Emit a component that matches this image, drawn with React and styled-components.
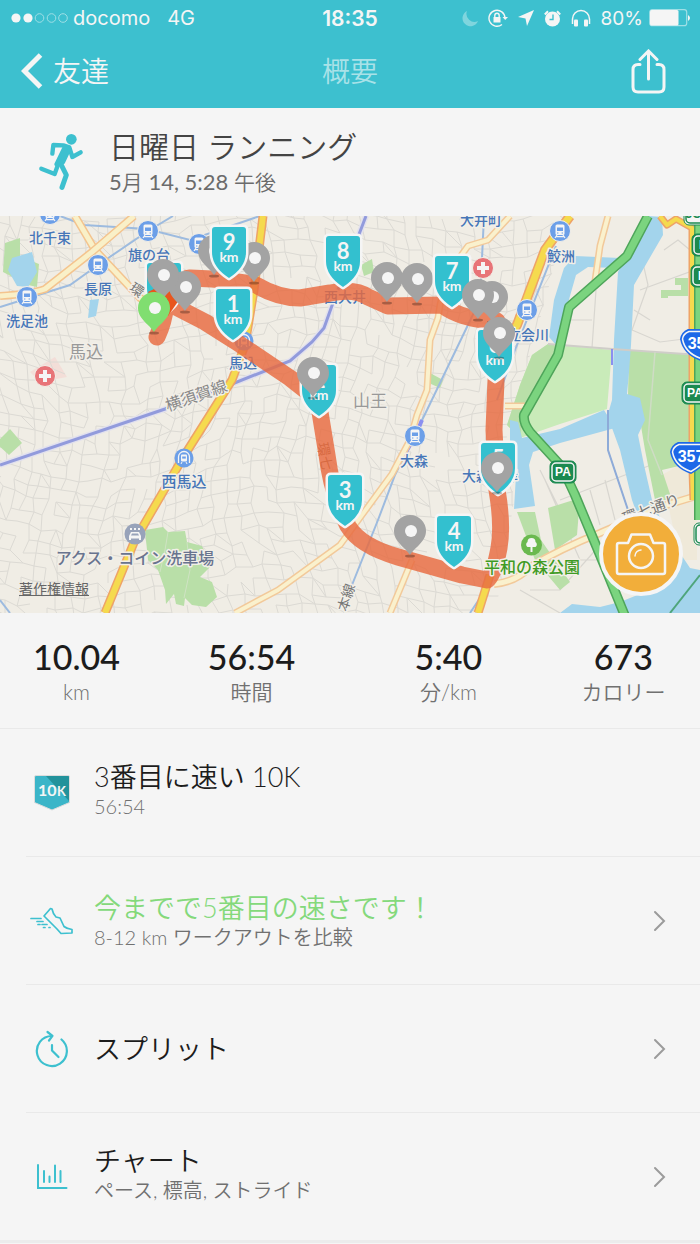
import React from 'react';
import styled, { createGlobalStyle } from 'styled-components';

const TEAL = '#3dc0cf';

const GlobalStyle = createGlobalStyle`
  * {
    box-sizing: border-box;
  }

  body {
    margin: 0;
    background: #f5f5f5;
    color: #1c1c1c;
    font-family: Lato, 'Noto Sans CJK JP', sans-serif;
    font-weight: 350;
  }
`;

const Header = styled.header`
  background: ${TEAL};
  color: #f5f5f5;
`;

const StatusBar = styled.div`
  display: grid;
  grid-template-columns: 1fr auto 1fr;
  align-items: center;
  height: 36px;
  padding: 0 10px;
  font-family: Inter, 'Liberation Sans', sans-serif;
  font-size: 20px;
  font-weight: 400;
`;

const StatusSide = styled.div`
  display: flex;
  align-items: center;
  justify-content: ${props => (props.$end ? 'flex-end' : 'flex-start')};
  gap: ${props => (props.$end ? '10px' : '5px')};
`;

const Network = styled.span`
  margin-left: 12px;
`;

const Clock = styled.time`
  font-size: 21px;
  font-weight: 600;
`;

const Battery = styled.div`
  display: flex;
  align-items: center;
  gap: 6px;
  font-size: 19px;
`;

const NavBar = styled.nav`
  display: grid;
  grid-template-columns: 1fr auto 1fr;
  align-items: center;
  height: 72px;
  padding: 0 21px 2px;
`;

const NavButton = styled.button`
  display: flex;
  align-items: center;
  justify-self: ${props => (props.$end ? 'end' : 'start')};
  gap: 10px;
  padding: ${props => (props.$end ? '0 13px' : '0')};
  border: none;
  background: transparent;
  color: inherit;
  font: inherit;
  font-size: 28px;
  line-height: 36px;
  cursor: pointer;
`;

const NavTitle = styled.h1`
  margin: 0;
  font-size: 28px;
  font-weight: 350;
  line-height: 36px;
  color: #a9e2e8;
`;

const Activity = styled.section`
  display: flex;
  align-items: center;
  gap: 25px;
  height: 108px;
  padding: 0 38px;
`;

const ActivityTitle = styled.h2`
  margin: 0;
  font-size: 30px;
  font-weight: 350;
  line-height: 40px;
  color: #444;
`;

const ActivityDate = styled.p`
  margin: 0;
  font-size: 22px;
  font-weight: 400;
  line-height: 32px;
  color: #6b6b6b;

  span {
    font-size: 21px;
    font-weight: 350;
  }
`;

const MapBox = styled.section`
  position: relative;
`;

const MapSvg = styled.svg`
  display: block;
  width: 100%;
  height: auto;
  font-family: 'Noto Sans CJK JP', sans-serif;
`;

const MapLabel = styled.text`
  fill: ${props => props.$color || '#4676b8'};
  font-size: ${props => props.$size || 14}px;
  font-weight: ${props => props.$weight || 500};
  text-anchor: middle;
  stroke: #f2efe8;
  stroke-width: 3px;
  stroke-linejoin: round;
  paint-order: stroke;
`;

const ShieldText = styled.text`
  fill: #f5f5f5;
  font-family: Lato, sans-serif;
  font-size: ${props => props.$size}px;
  font-weight: 700;
  text-anchor: ${props => props.$anchor || 'middle'};
`;

const RoadText = styled.text`
  fill: ${props => props.$color || '#fff'};
  font-family: 'Liberation Sans', sans-serif;
  font-size: ${props => props.$size || 16}px;
  font-weight: 700;
  text-anchor: middle;
`;

const Copyright = styled.a`
  position: absolute;
  left: 19px;
  bottom: 14px;
  color: #666;
  font-size: 14px;
  font-weight: 400;
  line-height: 20px;
`;

const CameraButton = styled.button`
  position: absolute;
  right: 17px;
  bottom: 17px;
  display: flex;
  align-items: center;
  justify-content: center;
  width: 84px;
  height: 84px;
  padding: 0;
  border: 4px solid #f5f5f5;
  border-radius: 50%;
  background: #f2ae3a;
  cursor: pointer;
`;

const Stats = styled.dl`
  display: grid;
  grid-template-columns: 7fr 9fr 9fr 7fr;
  margin: 0;
  padding: 22px 0 23px;
  border-bottom: 1px solid #e9e9e9;
  text-align: center;
`;

const Stat = styled.div`
  display: flex;
  flex-direction: column-reverse;
`;

const StatLabel = styled.dt`
  font-size: 21px;
  line-height: 26px;
  color: #707070;
`;

const StatValue = styled.dd`
  margin: 0;
  font-size: 34px;
  font-weight: 500;
  line-height: 44px;
`;

const List = styled.ul`
  margin: 0;
  padding: 0 0 0 26px;
  border-bottom: 3px solid #ececec;
  list-style: none;
`;

const Item = styled.li`
  border-bottom: 1px solid #e9e9e9;

  &:last-child {
    border-bottom: none;
  }
`;

const Row = styled.a`
  display: flex;
  align-items: center;
  gap: 16px;
  height: 127px;
  padding-right: 34px;
  color: inherit;
  text-decoration: none;
`;

const RowIcon = styled.span`
  display: flex;
  justify-content: center;
  width: 52px;
`;

const RowText = styled.span`
  display: flex;
  flex: 1;
  flex-direction: column;
  padding-bottom: ${props => (props.$raised ? '6px' : '0')};
`;

const RowTitle = styled.span`
  font-size: 27px;
  line-height: 32px;
  color: ${props => (props.$highlight ? '#84d97b' : '#1c1c1c')};
`;

const RowSub = styled.span`
  font-size: 20px;
  font-weight: 350;
  line-height: 26px;
  color: #707070;
`;

// Side streets: a jittered, warped grid with some of its edges left out
const buildStreets = () => {
  let seed = 7;
  const rand = () => {
    seed = (seed * 16807) % 2147483647;
    return seed / 2147483647;
  };
  const step = 13;
  const cols = 46;
  const rows = 34;
  const points = [];
  for (let r = 0; r < rows; r++) {
    points.push([]);
    for (let c = 0; c < cols; c++) {
      const x = c * step - 20;
      const y = 205 + r * step;
      points[r].push([
        Math.round(x + Math.sin(y / 55 + x / 140) * 14 + (rand() - 0.5) * 6),
        Math.round(y + Math.sin(x / 60) * 16 + (rand() - 0.5) * 6),
      ]);
    }
  }
  let d = '';
  for (let r = 0; r < rows - 1; r++) {
    for (let c = 0; c < cols - 1; c++) {
      const [x, y] = points[r][c];
      if (rand() > 0.22) d += `M${x} ${y}L${points[r][c + 1].join(' ')}`;
      if (rand() > 0.22) d += `M${x} ${y}L${points[r + 1][c].join(' ')}`;
      if (rand() > 0.88) d += `M${x} ${y}L${points[r + 1][c + 1].join(' ')}`;
    }
  }
  return d;
};

const STREETS = buildStreets();

const ROUTE =
  'M157 337 Q164 322 166 304 Q172 280 190 278 L212 279 Q236 281 256 285 Q278 298 300 298 L330 293 Q355 288 368 297 L388 306 L442 305 Q462 320 497 321 L496 380 L494 430 L497 490 Q503 525 499 548 Q494 575 487 580 L462 575 L398 557 Q360 546 348 526 Q332 495 327 455 L318 400 L290 378 L235 341 L205 322 L170 304';

const ROADS = [
  { d: 'M75 216 L95 250 L140 298 L165 312', casing: '#f4c48e', color: '#f9f0c8', width: 6 },
  { d: 'M134 216 L92 252 L45 289 Q30 294 0 296', casing: '#f4c48e', color: '#f9f0c8', width: 6 },
  { d: 'M510 216 L488 240 L468 246 L447 275 L440 305 L438 318 L430 340 L427 390 L417 415 L410 440 L392 474 L340 545 L278 590 L235 613', casing: '#f2c99a', color: '#faf1cd', width: 5 },
  { d: 'M412 560 L390 613', casing: '#f2c99a', color: '#faf1cd', width: 5 },
  { d: 'M608 216 L600 246 L594 288', casing: '#f2c99a', color: '#faf1cd', width: 5 },
  { d: 'M505 406 L525 406', casing: '#f2c99a', color: '#faf1cd', width: 5 },
  { d: 'M494 584 Q516 582 530 567 Q560 549 600 533 L660 507 L693 497', casing: '#f2c99a', color: '#faf1cd', width: 6 },
  { d: 'M263 216 L254 290 L245 345 L232 380 L184 456 L135 540 L105 613', casing: '#eea367', color: '#f5da4e', width: 7 },
  { d: 'M570 216 L545 250 L530 290 L517 325 L500 350', casing: '#eea367', color: '#f5da4e', width: 8 },
  { d: 'M490 575 L478 613', casing: '#eea367', color: '#f5da4e', width: 7 },
  { d: 'M660 216 L667 225 L676 219 L692 228 L692 470', casing: '#eea367', color: '#f5da4e', width: 5 },
  { d: 'M692 470 L693 500', casing: '#eea367', color: '#f5da4e', width: 5 },
  { d: 'M648 216 L627 256 L569 307 L558 355 L524 415 Q523 423 530 432 L562 467 L575 495 L600 555 L625 616', casing: '#4ea55a', color: '#7bd47f', width: 8 },
  { d: 'M699 216 L699 520', casing: '#4ea55a', color: '#7bd47f', width: 8 },
];

const STATIONS = [
  [50, 214], [148, 231], [98, 265], [27, 297], [199, 244], [560, 231], [527, 310], [415, 436],
];

const METROS = [[184, 458], [244, 341]];

const PLACES = [
  { text: '北千束', x: 50, y: 243 },
  { text: '旗の台', x: 149, y: 260 },
  { text: '長原', x: 98, y: 294 },
  { text: '洗足池', x: 27, y: 326 },
  { text: '大井町', x: 481, y: 225 },
  { text: '鮫洲', x: 561, y: 261 },
  { text: '立会川', x: 528, y: 340 },
  { text: '大森', x: 414, y: 466 },
  { text: '大森海岸', x: 490, y: 481 },
  { text: '馬込', x: 243, y: 368 },
  { text: '西大井', x: 345, y: 302 },
  { text: '西馬込', x: 184, y: 487, size: 15 },
  { text: '馬込', x: 86, y: 358, size: 17, color: '#999', weight: 400 },
  { text: '山王', x: 370, y: 407, size: 17, color: '#999', weight: 400 },
  { text: 'アクス・コイン洗車場', x: 135, y: 564, size: 16, color: '#69748f' },
];

const Street = ({ d, casing, color, width }) => (
  <g fill="none" strokeLinejoin="round">
    <path d={d} stroke={casing} strokeWidth={width + 2} />
    <path d={d} stroke={color} strokeWidth={width - 1} />
  </g>
);

const Station = ({ x, y }) => (
  <g transform={`translate(${x} ${y})`}>
    <circle r="10.5" fill="#6c9fe8" stroke="#f2efe8" />
    <rect x="-4.5" y="-6.5" width="9" height="10.5" rx="1.5" fill="#f5f5f5" />
    <path d="M-3 -3.5H3V0H-3Z" fill="#6c9fe8" />
    <path d="M-3 4L-5 7M3 4L5 7M-4 5.6H4" stroke="#f5f5f5" strokeWidth="1.2" />
    <path d="M-3 2H-1.6M1.6 2H3" stroke="#6c9fe8" strokeWidth="1.2" />
  </g>
);

const Metro = ({ x, y }) => (
  <g transform={`translate(${x} ${y})`}>
    <circle r="9.5" fill="#6c9fe8" />
    <path d="M-5.5 5V-1A5.5 5.5 0 0 1 5.5 -1V5" fill="none" stroke="#f5f5f5" strokeWidth="1.3" />
    <rect x="-3" y="-3.5" width="6" height="7" rx="1" fill="#f5f5f5" />
    <path d="M-1.8 -1.5H1.8V0.6H-1.8Z" fill="#6c9fe8" />
    <path d="M-2 4L-3 6M2 4L3 6" stroke="#f5f5f5" />
  </g>
);

const Shield = ({ x, y, n }) => (
  <g transform={`translate(${x} ${y})`}>
    <path
      d="M-14 -53H14Q17 -53 17 -50V-28Q17 -13 0 -2Q-17 -13 -17 -28V-50Q-17 -53 -14 -53Z"
      fill="#33c0cf"
      stroke="#f5f5f5"
      strokeWidth="5"
      strokeLinejoin="round"
      paintOrder="stroke"
    />
    {n && <ShieldText $size={22} y="-30">{n}</ShieldText>}
    {n && <ShieldText $size={14} y="-18">km</ShieldText>}
  </g>
);

const Pin = ({ x, y, color = '#a3a3a3' }) => (
  <g transform={`translate(${x} ${y})`}>
    <ellipse cy="2" rx="5" ry="1.5" fill="#000" opacity="0.28" />
    <path
      d="M0 1C-4 -6 -16 -12 -16 -23A16 16 0 0 1 16 -23C16 -12 4 -6 0 1Z"
      fill={color}
    />
    <circle cx="1" cy="-23" r="6" fill="#f5f5f5" />
  </g>
);

const GreenSign = ({ x, y, text, light }) => (
  <g transform={`translate(${x} ${y})`}>
    <rect x="-13" y="-11" width="26" height="22" rx="5" fill={light ? '#f5f5f5' : '#1b8a50'} stroke="#1b8a50" />
    <rect x="-11" y="-9" width="22" height="18" rx="4" fill="none" stroke={light ? '#1b8a50' : '#f5f5f5'} strokeWidth="1.5" />
    <RoadText y="4" $size={12} $color={light ? '#1b8a50' : '#fff'}>{text}</RoadText>
  </g>
);

const RouteSign = ({ x, y }) => (
  <g transform={`translate(${x} ${y})`}>
    <path d="M-13 -16H13Q20 -13 21 -6Q18 6 0 16Q-18 10 -21 -6Q-20 -13 -13 -16Z" fill="#1d68e8" />
    <path d="M-12 -13.5H12Q18 -11 18.5 -6Q15 5 0 13.5Q-16 8 -18.5 -6Q-18 -11 -12 -13.5Z" fill="none" stroke="#f5f5f5" strokeWidth="1.5" />
    <RoadText y="4">357</RoadText>
  </g>
);

const RouteMap = () => (
  <MapSvg viewBox="0 216 700 397" role="img" aria-label="ランニングルート">
    <rect y="216" width="700" height="397" fill="#f0ede5" />

    <path d="M30 372L55 357L67 377L40 382Z" fill="#f3ded8" />
    <path d={STREETS} fill="none" stroke="#dcdad4" strokeWidth="1" />
    <path d="M5 243L20 238L20 256L34 262L39 264L37 287L28 285L3 272Z" fill="#b9dfa8" />
    <path d="M10 429L22 443L9 455L-4 443Z" fill="#b9dfa8" />
    <path d="M145 530L163 527L168 532L185 531L187 542L202 546L208 560L214 563L200 577L212 582L217 597L206 607L192 605L185 598L184 606L176 604L174 594L166 604L165 590L158 570L148 560Z" fill="#b9dfa8" />
    <path d="M168 532L165 550L160 572M187 542L190 570L184 598" fill="none" stroke="#cfe3c3" />
    <path d="M361 265L372 259L374 272L364 276Z" fill="#b9dfa8" />
    <path d="M430 373L443 380L440 388L431 384Z" fill="#b9dfa8" />

    {/* ground east of the side streets */}
    <path d="M566 216H700V613H494L500 590L514 500L506 440L530 355L548 290Z" fill="#f0ede5" />
    <path d="M596 290L592 348M640 290L700 268M655 240L640 250L648 285L632 330L660 342L692 338M664 250L678 240L690 250M634 310L650 320M570 320H592M545 480L580 560M560 500L690 450M590 490L600 525M605 480L615 520M540 470L560 510M600 545L560 590L530 590M580 560L610 560M520 590L560 613" fill="none" stroke="#d8d6d0" strokeWidth="1.2" />
    <path d="M662 475L697 455V560H680Z" fill="#efe6d0" opacity="0.6" />

    <path d="M548 344L612 350L607 409L560 424L520 438L507 425L520 385L532 355Z" fill="#c9ebb9" />
    <path d="M548 344L560 346L524 412L520 438L507 425L520 385L532 355Z" fill="#b9dfa8" />
    <path d="M629 350L694 355L696 462L662 470L672 500L655 500L645 450L640 420L628 395Z" fill="#b9dfa8" />
    <path d="M661 290H681V285H675V278H688V296H668V298H661Z" fill="#b9dfa8" />
    <path d="M517 512L535 512L541 540L570 582L560 590L535 560Z" fill="#b9dfa8" />
    <path d="M548 508L580 498L577 535L555 550Z" fill="#b9dfa8" />

    <g fill="#a3d4ec">
      <path d="M12 258L32 252L37 272L28 287L17 286L8 270Z" />
      <path d="M90 300L99 299L96 316L88 318Z" />
      <path d="M648 216L662 217L663 235L634 285L631 345L629 372L627 394L640 398L645 420L638 435L644 465L652 500L668 535L690 568L700 570V613H560L572 604L600 607L620 602L650 590L652 555L632 500L620 450L612 428L604 428L612 400L614 340L618 272Z" />
      <path d="M575 256L620 258L616 268L588 267L576 275L566 310L556 345L549 337L554 300L564 268Z" />
      <path d="M510 420L518 422L522 438L560 429L604 410L615 428L560 443L533 452L529 465L535 506L514 509L517 458L510 440Z" />
    </g>

    <path d="M548 344L612 349L700 355" fill="none" stroke="#cfcdc8" strokeWidth="2" />
    <path d="M655 352L648 440L662 475" fill="none" stroke="#cfdcc5" strokeWidth="1.5" />

    <g fill="none" stroke="#9dbbdf" strokeWidth="2">
      <path d="M60 216L84 225L147 229L190 240L260 216" />
      <path d="M0 307L70 285L98 265L148 231L173 216" />
      <path d="M484 216L480 300L427 410L395 475L378 520L350 590" />
      <path d="M556 246L515 350L497 400M492 580L470 613" />
      <path d="M0 600L10 613" />
    </g>
    <path d="M608 410L608 450L628 510" fill="none" stroke="#8eabd8" strokeWidth="2" />
    <path d="M700 575L670 613" stroke="#4ea57a" strokeWidth="2" />
    <path d="M0 465L165 409L232 384L290 361L312 342L324 328L334 300L366 216" fill="none" stroke="#e2e1ee" strokeWidth="6" />
    <path d="M0 465L165 409L232 384L290 361L312 342L324 328L334 300L366 216" fill="none" stroke="#929bdc" strokeWidth="3" />
    <path d="M422 420L419 427M410 445L406 452" stroke="#8b8ff0" strokeWidth="4" />
    <path d="M612 349V365" stroke="#8b8ff0" strokeWidth="2" />

    {ROADS.map((road, index) => (
      <Street key={index} {...road} />
    ))}

    {STATIONS.map(([x, y]) => <Station key={x} x={x} y={y} />)}
    {METROS.map(([x, y]) => <Metro key={x} x={x} y={y} />)}
    <g transform="translate(135 534)">
      <circle r="10.5" fill="#98a3ba" />
      <path d="M-6 6V2L-4 -2H4L6 2V6H4V4.5H-4V6Z" fill="#f5f5f5" />
      <path d="M-3 -0.5H3L4 1.500H-4Z" fill="#98a3ba" />
      <path d="M-4 -6V-4M0 -6V-4M4 -6V-4" stroke="#f5f5f5" strokeWidth="2" />
    </g>
    <g transform="translate(531.5 545)">
      <circle r="10.5" fill="#6ab94f" />
      <path d="M-1 7V2H-4A3 3 0 0 1 -4 -3A4 4 0 0 1 4 -3A3 3 0 0 1 4 2H1V7Z" fill="#f5f5f5" />
    </g>
    {[[45, 376], [483, 268]].map(([x, y]) => (
      <g key={x} transform={`translate(${x} ${y})`}>
        <circle r="10.5" fill="#e87478" stroke="#f2efe8" />
        <path d="M-6 0H6M0 -6V6" stroke="#f5f5f5" strokeWidth="4" />
      </g>
    ))}

    {PLACES.map(({ text, x, y, size, color, weight }) => (
      <MapLabel key={`${text}${x}`} x={x} y={y} $size={size} $color={color} $weight={weight}>
        {text}
      </MapLabel>
    ))}
    <MapLabel $size={16} $color="#888" $weight={400} transform="translate(198 401) rotate(-19)">横須賀線</MapLabel>
    <MapLabel $color="#777" $weight={400} transform="translate(134 294) rotate(35)">環</MapLabel>
    <MapLabel $color="#777" $weight={400} transform="translate(351 599) rotate(-72)">本線</MapLabel>
    <MapLabel $size={15} $color="#777" $weight={400} transform="translate(653 514) rotate(-20)">環七通り</MapLabel>
    <MapLabel $color="#8a6a50" $weight={400} transform="translate(320 457) rotate(80)">環七</MapLabel>

    <path d={ROUTE} fill="none" stroke="#e86a40" strokeOpacity="0.82" strokeWidth="17" strokeLinejoin="round" strokeLinecap="round" />
    <MapLabel x="532" y="573" $size={16} $color="#3f9b24">平和の森公園</MapLabel>

    <Shield x={164} y={316} />
    <path d="M148 292L168 282L179 300L168 316Z" fill="#e8561e" />
    <Pin x={214} y={274} />
    <Pin x={254} y={281} />
    <Pin x={387} y={301} />
    <Pin x={417} y={302} />
    <Shield x={229} y={280} n={9} />
    <Shield x={343} y={289} n={8} />
    <Shield x={452} y={309} n={7} />
    <Shield x={233} y={342} n={1} />
    <Shield x={319} y={418} n={2} />
    <Shield x={345} y={528} n={3} />
    <Shield x={454} y={569} n={4} />
    <Shield x={498} y={496} n={5} />
    <Shield x={495} y={383} n={6} />
    <Pin x={185} y={310} />
    <Pin x={163} y={298} />
    <Pin x={154} y={331} color="#80de70" />
    <Pin x={313} y={396} />
    <Pin x={492} y={320} />
    <Pin x={478} y={318} />
    <Pin x={499} y={356} />
    <Pin x={497} y={491} />
    <Pin x={410} y={554} />

    <GreenSign x={563} y={472} text="PA" />
    <GreenSign x={695} y={393} text="PA" />
    <GreenSign x={705} y={245} text="IC" />
    <GreenSign x={704} y={276} text="IC" />
    <GreenSign x={697} y={214} text="JCT" light />
    <GreenSign x={707} y={534} text="J" light />
    <RouteSign x={701} y={345} />
    <RouteSign x={691} y={458} />
  </MapSvg>
);

const SignalDots = () => (
  <svg width="58" height="12" viewBox="0 0 58 12" fill="none" stroke="#9fdfe6">
    <circle cx="6" cy="6" r="4.6" fill="#f5f5f5" stroke="none" />
    <circle cx="18" cy="6" r="4.6" fill="#f5f5f5" stroke="none" />
    <circle cx="29.5" cy="6" r="4.3" />
    <circle cx="41.5" cy="6" r="4.3" />
    <circle cx="53" cy="6" r="4.3" />
  </svg>
);

const StatusIcons = () => (
  <>
    <svg width="16" height="17" viewBox="0 0 16 17">
      <path d="M5 1A8 8 0 1 0 16 11A8 8 0 0 1 5 1Z" fill="#7fd5de" />
    </svg>
    <svg width="20" height="18" viewBox="0 0 20 18" fill="none" stroke="#f5f5f5" strokeWidth="1.4">
      <path d="M14 15.5A8 8 0 1 1 17 9" />
      <path d="M14.5 8H20L17.2 11Z" fill="#f5f5f5" stroke="none" />
      <rect x="5.5" y="8" width="7" height="5.5" fill="#f5f5f5" stroke="none" />
      <path d="M6.8 8V6.4A2.2 2.2 0 0 1 11.2 6.4V8" />
    </svg>
    <svg width="16" height="16" viewBox="0 0 16 16">
      <path d="M0 7L16 0L9 16L7.5 8.5Z" fill="#f5f5f5" />
    </svg>
    <svg width="17" height="17" viewBox="0 0 17 17">
      <circle cx="8.5" cy="9" r="7.5" fill="#f5f5f5" />
      <path d="M0.8 4.5L4 1.2M16.2 4.5L13 1.2" stroke="#f5f5f5" strokeWidth="2" />
      <path d="M9 4.5V9.5H5.5" fill="none" stroke={TEAL} strokeWidth="1.4" />
    </svg>
    <svg width="20" height="18" viewBox="0 0 20 18">
      <path d="M1.5 15V10A8.5 8.5 0 0 1 18.5 10V15" fill="none" stroke="#f5f5f5" strokeWidth="1.5" />
      <rect x="3" y="10.5" width="4" height="7" rx="1" fill="#f5f5f5" />
      <rect x="13" y="10.5" width="4" height="7" rx="1" fill="#f5f5f5" />
    </svg>
  </>
);

const BatteryIcon = () => (
  <svg width="41" height="18" viewBox="0 0 41 18">
    <rect x="0.7" y="0.7" width="37" height="16" rx="2.5" fill="none" stroke="#9fdfe6" strokeWidth="1.2" />
    <rect x="1" y="1" width="28.5" height="15.5" rx="1.5" fill="#f5f5f5" />
    <path d="M39 6Q41 7.5 41 9Q41 10.5 39 12Z" fill="#f5f5f5" />
  </svg>
);

const BackIcon = () => (
  <svg width="22" height="36" viewBox="0 0 22 36" fill="none" stroke="#f5f5f5" strokeWidth="5">
    <path d="M19.5 2L3.5 18L19.5 34" />
  </svg>
);

const ShareIcon = () => (
  <svg width="35" height="45" viewBox="0 0 35 45" fill="none" stroke="#f5f5f5" strokeWidth="3" strokeLinecap="round">
    <path d="M9 15.5H7Q2 15.5 2 20.5V38Q2 43 7 43H28Q33 43 33 38V20.5Q33 15.5 28 15.5H26" />
    <path d="M17.5 30V2.5M9 10.5L17.5 2L26 10.5" />
  </svg>
);

const RunnerIcon = () => (
  <svg width="46" height="58" viewBox="112 404 138 174" fill="none" stroke={TEAL} strokeLinecap="round" strokeLinejoin="round">
    <circle cx="212" cy="423" r="16" fill={TEAL} stroke="none" />
    <path d="M155 466L158 440L188 441L206 447L215 476L240 462" strokeWidth="13" />
    <path d="M191 446L207 452L188 493L166 498Z" fill={TEAL} strokeWidth="10" />
    <path d="M178 492L197 530L184 567" strokeWidth="15" />
    <path d="M173 496L162 527L122 511" strokeWidth="13" />
  </svg>
);

const CameraIcon = () => (
  <svg width="52" height="44" viewBox="0 0 52 44" fill="none" stroke="#f5f5f5" strokeWidth="2.5" strokeLinejoin="round" strokeLinecap="round">
    <path d="M4 11H13L16.5 2.5H35L38.5 11H48Q50 11 50 13V40Q50 42 48 42H4Q2 42 2 40V13Q2 11 4 11Z" />
    <circle cx="26" cy="24" r="12" />
    <path d="M20 24A6 6 0 0 1 26 18" strokeWidth="1.5" />
  </svg>
);

const BadgeIcon = () => (
  <svg width="38" height="38" viewBox="0 0 38 38">
    <path d="M3 1.5H35Q36.5 1.5 36.5 3V28.5L19 36L1.5 28.5V3Q1.5 1.5 3 1.5Z" fill="#3bb5c8" stroke="#dcdcdc" />
    <path d="M13 2H35Q36 2 36 3V27Z" fill="#22929b" />
    <ShieldText $size={16} $anchor="start" x="5" y="22">10</ShieldText>
    <ShieldText $size={13} $anchor="start" x="24" y="22">K</ShieldText>
  </svg>
);

const ShoeIcon = () => (
  <svg width="44" height="28" viewBox="0 0 44 28" fill="none" stroke={TEAL} strokeWidth="1.7" strokeLinecap="round" strokeLinejoin="round">
    <path d="M14 9L20.5 1.5L22 2Q23 7 26 10L30 11L34 19.5Q37 22 42 22.5V26L31 26.5L27 22Z" />
    <path d="M1 11.5H11M7 14.5H13M8 17.5H10M12 17.5H17M13.5 20.5H15M19 20.5H20" />
  </svg>
);

const SplitIcon = () => (
  <svg width="34" height="38" viewBox="0 0 34 38" fill="none" stroke={TEAL} strokeWidth="2.2" strokeLinecap="round" strokeLinejoin="round">
    <path d="M26.5 9.500A15 15 0 1 1 17 6" />
    <path d="M12.5 2L17.5 5.8L14 10.5M17 15V20.5L23.5 27" />
  </svg>
);

const ChartIcon = () => (
  <svg width="32" height="27" viewBox="0 0 32 27" fill="none" stroke={TEAL} strokeWidth="2" strokeLinecap="round">
    <path d="M2 2V25H30.5M8 8V19M13.5 13.5V19M19 2.5V19M24.5 8V19" />
  </svg>
);

const ChevronIcon = () => (
  <svg width="13" height="22" viewBox="0 0 13 22" fill="none" stroke="#9b9b9b" strokeWidth="2" strokeLinecap="round">
    <path d="M2 2L11 11L2 20" />
  </svg>
);

const STATS = [
  { value: '10.04', label: 'km' },
  { value: '56:54', label: '時間' },
  { value: '5:40', label: '分/km' },
  { value: '673', label: 'カロリー' },
];

const ITEMS = [
  { icon: <BadgeIcon />, title: '3番目に速い 10K', sub: '56:54' },
  { icon: <ShoeIcon />, title: '今までで5番目の速さです！', sub: '8-12 km ワークアウトを比較', highlight: true, href: '#compare' },
  { icon: <SplitIcon />, title: 'スプリット', href: '#splits' },
  { icon: <ChartIcon />, title: 'チャート', sub: 'ペース, 標高, ストライド', href: '#charts' },
];

const App = () => (
  <>
    <GlobalStyle />
    <Header>
      <StatusBar>
        <StatusSide>
          <SignalDots />
          <span>docomo</span>
          <Network>4G</Network>
        </StatusSide>
        <Clock>18:35</Clock>
        <StatusSide $end>
          <StatusIcons />
          <Battery>
            <span>80%</span>
            <BatteryIcon />
          </Battery>
        </StatusSide>
      </StatusBar>
      <NavBar>
        <NavButton type="button">
          <BackIcon />
          友達
        </NavButton>
        <NavTitle>概要</NavTitle>
        <NavButton type="button" $end aria-label="共有">
          <ShareIcon />
        </NavButton>
      </NavBar>
    </Header>

    <main>
      <Activity>
        <RunnerIcon />
        <div>
          <ActivityTitle>日曜日 ランニング</ActivityTitle>
          <ActivityDate>5<span>月</span> 14, 5:28 <span>午後</span></ActivityDate>
        </div>
      </Activity>

      <MapBox>
        <RouteMap />
        <Copyright href="#legal">著作権情報</Copyright>
        <CameraButton type="button" aria-label="写真を追加">
          <CameraIcon />
        </CameraButton>
      </MapBox>

      <Stats>
        {STATS.map(({ value, label }) => (
          <Stat key={label}>
            <StatLabel>{label}</StatLabel>
            <StatValue>{value}</StatValue>
          </Stat>
        ))}
      </Stats>

      <List>
        {ITEMS.map(({ icon, title, sub, highlight, href }) => (
          <Item key={title}>
            <Row as={href ? 'a' : 'div'} href={href}>
              <RowIcon>{icon}</RowIcon>
              <RowText $raised={sub && !highlight}>
                <RowTitle $highlight={highlight}>{title}</RowTitle>
                {sub && <RowSub>{sub}</RowSub>}
              </RowText>
              {href && <ChevronIcon />}
            </Row>
          </Item>
        ))}
      </List>
    </main>
  </>
);

export default App;
